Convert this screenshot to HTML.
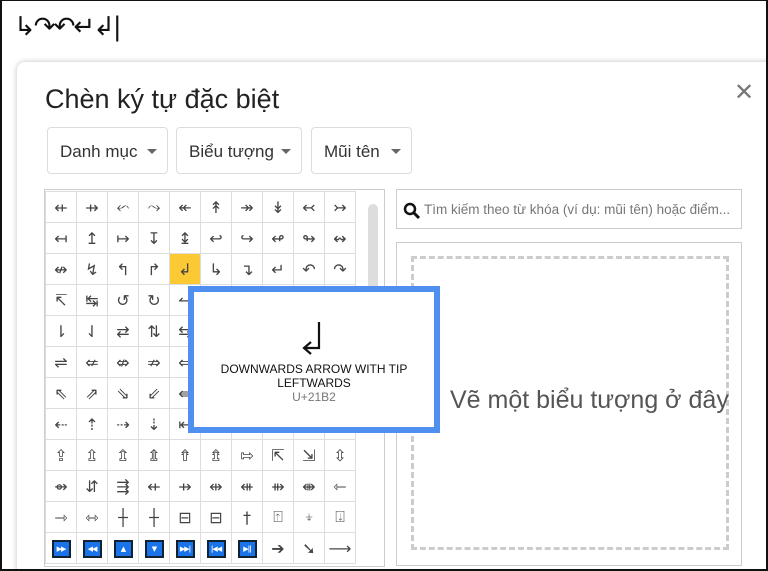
<!DOCTYPE html>
<html><head><meta charset="utf-8"><style>
*{box-sizing:border-box;margin:0;padding:0}
html,body{width:768px;height:571px;overflow:hidden}
body{background:#fff;position:relative;font-family:"Liberation Sans","DejaVu Sans",sans-serif}
.frame{position:absolute;left:0;top:0;width:768px;height:571px;border:2px solid #111;border-top-width:1px;z-index:50;pointer-events:none}
.top{position:absolute;left:14px;top:12px;font-size:26px;color:#111;font-family:"DejaVu Sans",sans-serif;letter-spacing:-2px}
.dlg{position:absolute;left:17px;top:62px;width:760px;height:520px;background:#fff;border-radius:8px;box-shadow:0 0 6px rgba(0,0,0,.25)}
.title{position:absolute;left:45px;top:84px;font-size:27px;color:#222}
.x{position:absolute;left:734px;top:78px;font-size:24px;color:#777;font-weight:bold}
.dd{position:absolute;top:127px;height:47px;border:1px solid #dadce0;border-radius:4px;font-size:17px;color:#333;padding:14px 0 0 12px;white-space:nowrap}
.dd:after{content:"";position:absolute;right:10px;top:21px;border-left:5px solid transparent;border-right:5px solid transparent;border-top:5px solid #666}
.gridbox{position:absolute;left:44px;top:189px;width:341px;height:378px;border:1px solid #ccc;overflow:hidden}
table{position:absolute;left:0;top:1px;border-collapse:collapse;table-layout:fixed}
td{width:31px;height:31px;border:1px solid #ddd;text-align:center;vertical-align:middle;font-size:16px;color:#444;font-family:"DejaVu Sans",sans-serif;overflow:hidden;white-space:nowrap;padding:0}
td.hl{background:#fbc934}
td b{display:inline-block;width:19px;height:18px;background:#1a73e8;border:2px solid #123;color:#fff;font-size:7px;line-height:14px;overflow:hidden;white-space:nowrap;vertical-align:middle;letter-spacing:-1px}
.sb{position:absolute;left:323px;top:14px;width:10px;height:90px;background:#ddd;border-radius:5px}
.search{position:absolute;left:396px;top:189px;width:346px;height:40px;border:1px solid #ccc;font-size:13.5px;color:#777;padding:12px 0 0 27px;white-space:nowrap;overflow:hidden}
.search svg{position:absolute;left:6px;top:12px}
.draw{position:absolute;left:396px;top:242px;width:346px;height:324px;border:1px solid #ccc}
.dash{position:absolute;left:14px;top:13px;width:318px;height:294px;border:3px dashed #ccc}
.dash span{position:absolute;left:36px;top:127px;font-size:25px;color:#555;white-space:nowrap}
.tip{position:absolute;left:188px;top:286px;width:252px;height:147px;border:6px solid #4f8ff0;background:#fff;text-align:center;z-index:10}
.tip svg{display:block;margin:28px auto 0}
.tip .n{font-size:12px;color:#111;line-height:14px;margin-top:6px}
.tip .c{font-size:12px;color:#777}
</style></head><body>
<div class="top">↳↷↶↵↲|</div>
<div class="dlg"></div>
<div class="title">Chèn ký tự đặc biệt</div>
<div class="x">✕</div>
<div class="dd" style="left:47px;width:121px">Danh mục&nbsp;</div>
<div class="dd" style="left:176px;width:126px">Biểu tượng</div>
<div class="dd" style="left:311px;width:101px">Mũi tên</div>
<div class="gridbox"><table>
<tr><td>⇷</td><td>⇸</td><td>⬿</td><td>⤳</td><td>↞</td><td>↟</td><td>↠</td><td>↡</td><td>↢</td><td>↣</td></tr>
<tr><td>↤</td><td>↥</td><td>↦</td><td>↧</td><td>↨</td><td>↩</td><td>↪</td><td>↫</td><td>↬</td><td>↭</td></tr>
<tr><td>↮</td><td>↯</td><td>↰</td><td>↱</td><td class="hl">↲</td><td>↳</td><td>↴</td><td>↵</td><td>↶</td><td>↷</td></tr>
<tr><td>↸</td><td>↹</td><td>↺</td><td>↻</td><td>↼</td><td>↽</td><td>↾</td><td>↿</td><td>⇀</td><td>⇁</td></tr>
<tr><td>⇂</td><td>⇃</td><td>⇄</td><td>⇅</td><td>⇆</td><td>⇇</td><td>⇈</td><td>⇉</td><td>⇊</td><td>⇋</td></tr>
<tr><td>⇌</td><td>⇍</td><td>⇎</td><td>⇏</td><td>⇐</td><td>⇑</td><td>⇒</td><td>⇓</td><td>⇔</td><td>⇕</td></tr>
<tr><td>⇖</td><td>⇗</td><td>⇘</td><td>⇙</td><td>⇚</td><td>⇛</td><td>⇜</td><td>⇝</td><td>⇞</td><td>⇟</td></tr>
<tr><td>⇠</td><td>⇡</td><td>⇢</td><td>⇣</td><td>⇤</td><td>⇥</td><td>⇦</td><td>⇧</td><td>⇨</td><td>⇩</td></tr>
<tr><td>⇪</td><td>⇫</td><td>⇬</td><td>⇭</td><td>⇮</td><td>⇯</td><td>⇰</td><td>⇱</td><td>⇲</td><td>⇳</td></tr>
<tr><td>⇴</td><td>⇵</td><td>⇶</td><td>⇷</td><td>⇸</td><td>⇹</td><td>⇺</td><td>⇻</td><td>⇼</td><td>⇽</td></tr>
<tr><td>⇾</td><td>⇿</td><td>┼</td><td>┼</td><td>⊟</td><td>⊟</td><td>†</td><td>⍐</td><td>⍖</td><td>⍗</td></tr>
<tr><td><b>▶▶</b></td><td><b>◀◀</b></td><td><b>▲</b></td><td><b>▼</b></td><td><b>▶▶|</b></td><td><b>|◀◀</b></td><td><b>▶||</b></td><td style="font-weight:bold">➔</td><td>➘</td><td>⟶</td></tr>
</table><div class="sb"></div></div>
<div class="search"><svg width="18" height="18" viewBox="0 0 18 18"><circle cx="7" cy="7" r="5" fill="none" stroke="#111" stroke-width="2.5"/><path d="M11 11l5 5" stroke="#111" stroke-width="3"/></svg>Tìm kiếm theo từ khóa (ví dụ: mũi tên) hoặc điểm...</div>
<div class="draw"><div class="dash"><span>Vẽ một biểu tượng ở đây</span></div></div>
<div class="tip"><svg width="30" height="36" viewBox="0 0 30 36"><path d="M20 2V28H6M12 22L5 28L12 34" fill="none" stroke="#111" stroke-width="2.2"/></svg><div class="n">DOWNWARDS ARROW WITH TIP<br>LEFTWARDS</div><div class="c">U+21B2</div></div>
<div class="frame"></div>
</body></html>
